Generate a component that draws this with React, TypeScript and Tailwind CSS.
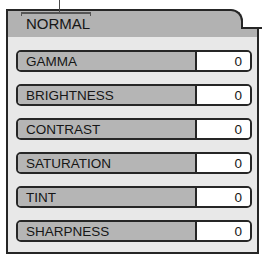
const ROWS = ["GAMMA", "BRIGHTNESS", "CONTRAST", "SATURATION", "TINT", "SHARPNESS"];

function SettingRow({ label, value }: { label: string; value: number }) {
  return (
    <div className="flex h-[22px] border-2 border-[#262626] rounded-[5px] overflow-hidden">
      <div className="flex-1 flex items-center bg-[#b5b5b5] pl-[8px] pt-[2px] text-[13.5px] leading-none text-[#161616]">
        {label}
      </div>
      <div className="w-[55px] flex items-center justify-end bg-white border-l-2 border-[#262626] pr-[8px] pt-[2px] text-[13.5px] leading-none text-[#161616]">
        {value}
      </div>
    </div>
  );
}

export default function App() {
  return (
    <div className="relative w-[262px] h-[256px] bg-white pt-[9px] pl-[6px] font-['Liberation_Sans',Arial,sans-serif]">
      {/* callout line + bracket */}
      <div className="absolute left-[58.5px] top-0 w-[1.5px] h-[13px] bg-[#4a4a4a]" />
      <div className="absolute left-[21px] top-[12px] w-[70px] h-[3.5px] border-t-2 border-l-[1.5px] border-r-[1.5px] border-[#555]" />

      {/* tab header */}
      <div className="flex h-[20px]">
        <div className="w-[237px] bg-[#b2b2b2] border-t-2 border-l-2 border-r-2 border-[#262626] rounded-tr-[12px] pl-[18px] pt-[4.5px] text-[15px] leading-none text-[#161616]">
          NORMAL
        </div>
        <div className="flex-1 border-b-2 border-[#262626]" />
      </div>
      <div className="w-[253px] h-[8px] bg-[#b2b2b2] border-l-2 border-r-2 border-[#262626]" />

      {/* body */}
      <div className="w-[253px] flex flex-col gap-[12px] bg-[#e8e8e8] border-l-2 border-r-2 border-b-2 border-[#262626] pt-[13px] pl-[8px] pr-[5px] pb-[9.5px]">
        {ROWS.map((r) => (
          <SettingRow key={r} label={r} value={0} />
        ))}
      </div>
    </div>
  );
}
